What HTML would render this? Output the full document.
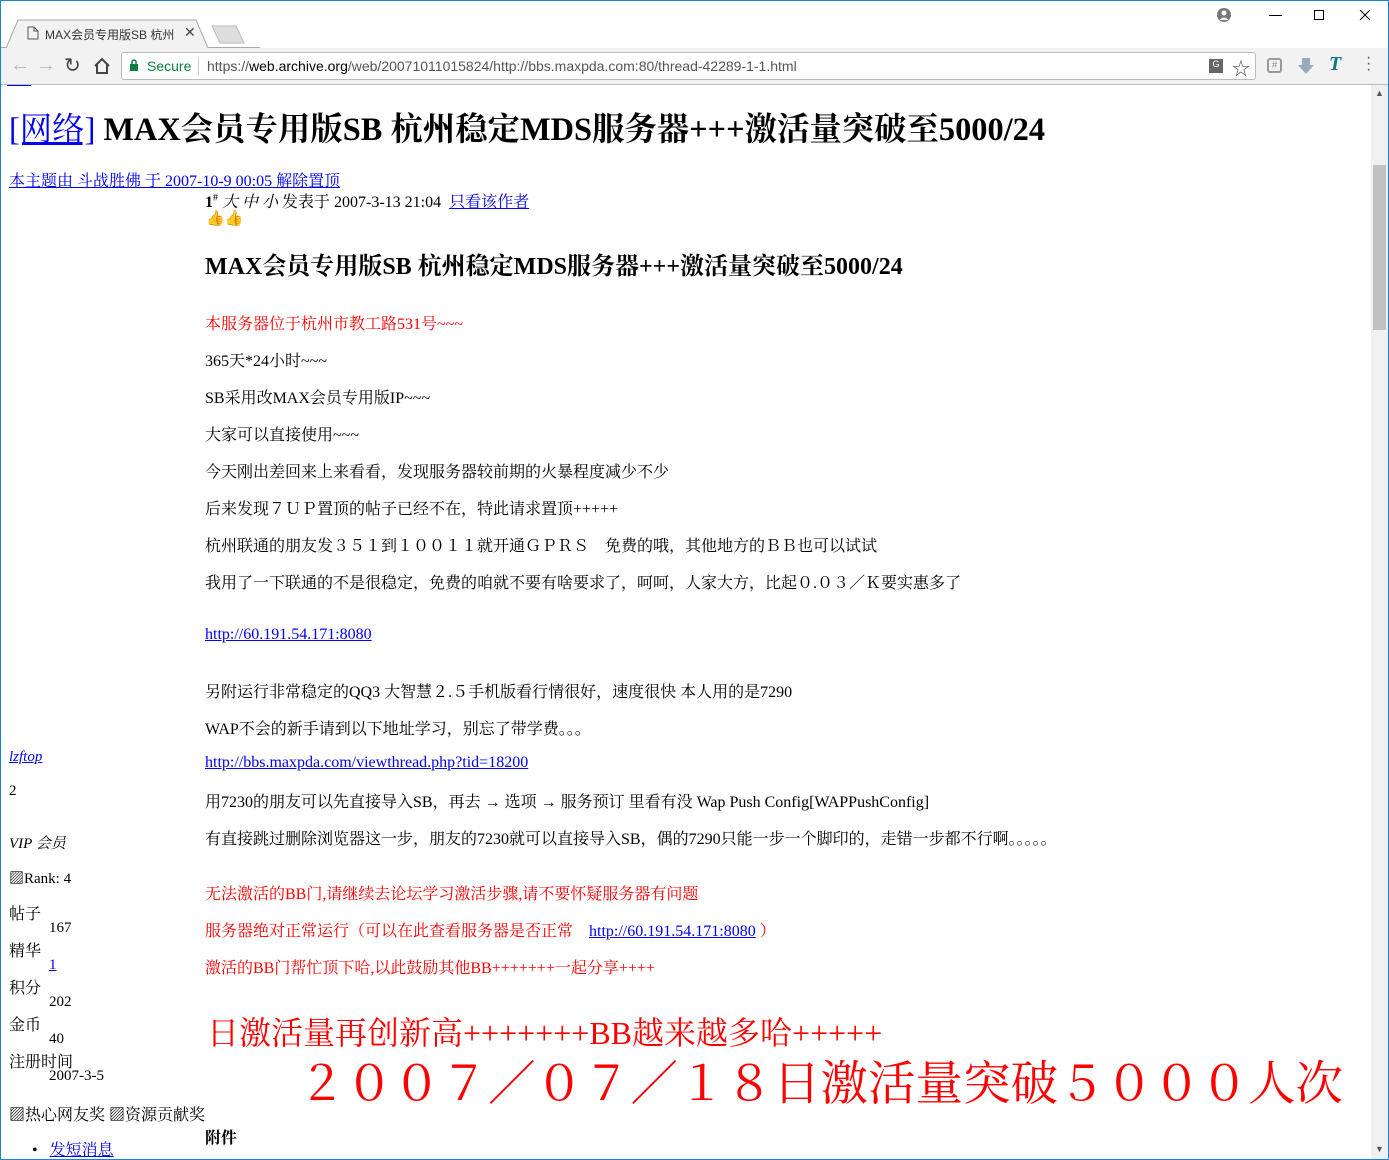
<!DOCTYPE html>
<html><head><meta charset="utf-8"><style>
*{margin:0;padding:0;box-sizing:border-box}
body{width:1389px;height:1160px;overflow:hidden;background:#fff;font-family:"Liberation Serif","Noto Serif CJK SC",serif;font-size:16px;color:#000;position:relative}
.frame{position:absolute;inset:0;border:1px solid #1883d7;pointer-events:none;z-index:9}
.ui{font-family:"Liberation Sans","Noto Sans CJK SC",sans-serif}
.a{position:absolute;white-space:nowrap}
a{color:#00e;text-decoration:underline}
.r{color:#f00}
</style></head><body>
<div class="frame"></div>
<div class="a" style="left:0;top:0;width:1389px;height:48px;background:#fff"></div>
<svg class="a" style="left:0;top:18px" width="260" height="32">
<path d="M6 30 L18 2 H196 L208 30" fill="#f2f2f2" stroke="#aaa"/>
<path d="M212 8 H236 L244 25 H220 Z" fill="#ddd" stroke="#bbb"/>
<path d="M0 29.5 H6 M208 29.5 H1389" stroke="#aaa"/>
</svg>
<svg class="a" style="left:27px;top:26px" width="12" height="14"><path d="M1 1H7L11 5V13H1Z M7 1V5H11" fill="none" stroke="#555"/></svg>
<div class="a ui" style="left:45px;top:26px;font-size:12px;color:#333;width:130px;overflow:hidden">MAX会员专用版SB 杭州稳</div>
<div class="a ui" style="left:184px;top:24px;font-size:14px;color:#444">✕</div>
<svg class="a" style="left:1216px;top:8px" width="160" height="16">
<circle cx="8" cy="7" r="7" fill="#777"/><circle cx="8" cy="5" r="2.5" fill="#fff"/><path d="M3.5 12 Q8 7 12.5 12" fill="#fff"/>
<path d="M53 7.5H66" stroke="#000"/>
<rect x="98.5" y="2.5" width="9" height="9" fill="none" stroke="#000"/>
<path d="M144 2 L154 12 M154 2 L144 12" stroke="#000"/>
</svg>
<div class="a" style="left:0;top:48px;width:1389px;height:37px;background:#f2f2f2;border-bottom:1px solid #bbb"></div>
<div class="a ui" style="left:10px;top:54px;font-size:20px;color:#bbb">←</div>
<div class="a ui" style="left:36px;top:54px;font-size:20px;color:#bbb">→</div>
<div class="a ui" style="left:64px;top:53px;font-size:20px;color:#444">↻</div>
<svg class="a" style="left:93px;top:57px" width="18" height="18"><path d="M2 9 L9 2 L16 9 M4 7 V16 H14 V7" fill="none" stroke="#444" stroke-width="2"/></svg>
<div class="a" style="left:121px;top:52px;width:1135px;height:28px;background:#fff;border:1px solid #bbb;border-radius:3px"></div>
<svg class="a" style="left:129px;top:59px" width="10" height="13"><rect x="1" y="5" width="8" height="7" fill="#0b8043"/><path d="M3 5V3a2 2 0 0 1 4 0V5" fill="none" stroke="#0b8043" stroke-width="1.5"/></svg>
<div class="a ui" style="left:147px;top:58px;font-size:14px;color:#0b8043">Secure</div>
<div class="a" style="left:198px;top:57px;width:1px;height:18px;background:#ccc"></div>
<div class="a ui" style="left:207px;top:58px;font-size:14px;color:#555">https://<span style="color:#000">web.archive.org</span>/web/20071011015824/http://bbs.maxpda.com:80/thread-42289-1-1.html</div>
<div class="a ui" style="left:1209px;top:59px;width:14px;height:14px;background:#666;color:#fff;font-size:9px;text-align:center">G</div>
<div class="a ui" style="left:1232px;top:55px;font-size:18px;color:#555">☆</div>
<div class="a ui" style="left:1267px;top:58px;width:15px;height:15px;border:2px solid #999;border-radius:3px;font-size:10px;color:#999;text-align:center;line-height:11px">#</div>
<svg class="a" style="left:1297px;top:57px" width="18" height="18"><path d="M5 1H13V8H17L9 17L1 8H5Z" fill="#9ab"/></svg>
<div class="a" style="left:1329px;top:53px;font-size:20px;font-style:italic;font-weight:bold;color:#178">T</div>
<div class="a ui" style="left:1366px;top:55px;font-size:16px;color:#555;line-height:6px">·<br>·<br>·</div>
<div class="a" style="left:1371px;top:85px;width:17px;height:1074px;background:#f0f0f0"></div>
<div class="a" style="left:1373px;top:165px;width:13px;height:165px;background:#c1c1c1"></div>
<div class="a ui" style="left:1375px;top:88px;font-size:9px;color:#555">▲</div>
<div class="a ui" style="left:1375px;top:1144px;font-size:9px;color:#555">▼</div>
<div class="a" style="left:7px;top:85px;width:24px;height:1px;background:#00e"></div>

<div class="a" style="left:9px;top:104px;font-size:32.4px;font-weight:bold"><a style="font-weight:normal">[网络]</a> MAX会员专用版SB 杭州稳定MDS服务器+++激活量突破至5000/24</div>
<div class="a" style="left:9px;top:168px"><a>本主题由 斗战胜佛 于 2007-10-9 00:05 解除置顶</a></div>
<div class="a" style="left:205px;top:189px;font-size:16px"><b>1</b><sup style="font-size:10px">#</sup> <i>大 中 小</i> 发表于 2007-3-13 21:04&nbsp; <a>只看该作者</a></div>
<div class="a" style="left:206px;top:209px;font-size:15px;color:#d90">👍👍</div>
<div class="a" style="left:205px;top:246px;font-size:24px;font-weight:bold">MAX会员专用版SB 杭州稳定MDS服务器+++激活量突破至5000/24</div>
<div class="a r" style="left:205px;top:311px">本服务器位于杭州市教工路531号~~~</div>
<div class="a" style="left:205px;top:348px">365天*24小时~~~</div>
<div class="a" style="left:205px;top:385px">SB采用改MAX会员专用版IP~~~</div>
<div class="a" style="left:205px;top:422px">大家可以直接使用~~~</div>
<div class="a" style="left:205px;top:459px">今天刚出差回来上来看看，发现服务器较前期的火暴程度减少不少</div>
<div class="a" style="left:205px;top:496px">后来发现７ＵＰ置顶的帖子已经不在，特此请求置顶+++++</div>
<div class="a" style="left:205px;top:533px">杭州联通的朋友发３５１到１００１１就开通ＧＰＲＳ　免费的哦，其他地方的ＢＢ也可以试试</div>
<div class="a" style="left:205px;top:570px">我用了一下联通的不是很稳定，免费的咱就不要有啥要求了，呵呵，人家大方，比起０.０３／Ｋ要实惠多了</div>
<div class="a" style="left:205px;top:626px;font-size:16px"><a>http://60.191.54.171:8080</a></div>
<div class="a" style="left:205px;top:679px">另附运行非常稳定的QQ3 大智慧２.５手机版看行情很好，速度很快 本人用的是7290</div>
<div class="a" style="left:205px;top:716px">WAP不会的新手请到以下地址学习，别忘了带学费。。。</div>
<div class="a" style="left:205px;top:754px;font-size:16px"><a>http://bbs.maxpda.com/viewthread.php?tid=18200</a></div>
<div class="a" style="left:205px;top:789px">用7230的朋友可以先直接导入SB，再去 → 选项 → 服务预订 里看有没 Wap Push Config[WAPPushConfig]</div>
<div class="a" style="left:205px;top:826px">有直接跳过删除浏览器这一步，朋友的7230就可以直接导入SB，偶的7290只能一步一个脚印的，走错一步都不行啊。。。。。</div>
<div class="a r" style="left:205px;top:881px">无法激活的BB门,请继续去论坛学习激活步骤,请不要怀疑服务器有问题</div>
<div class="a r" style="left:205px;top:918px">服务器绝对正常运行（可以在此查看服务器是否正常　<a style="font-size:16px">http://60.191.54.171:8080</a> ）</div>
<div class="a r" style="left:205px;top:955px">激活的BB门帮忙顶下哈,以此鼓励其他BB+++++++一起分享++++</div>
<div class="a r" style="left:207px;top:1008px;font-size:32px">日激活量再创新高+++++++BB越来越多哈+++++</div>
<div class="a r" style="left:298px;top:1045px;font-size:47.5px">２００７／０７／１８日激活量突破５０００人次</div>
<div class="a" style="left:205px;top:1125px;font-weight:bold">附件</div>

<div class="a" style="left:9px;top:749px;font-size:15px"><a><i>lzftop</i></a></div>
<div class="a" style="left:9px;top:783px;font-size:15px">2</div>
<div class="a" style="left:9px;top:832px;font-size:15px"><i>VIP 会员</i></div>
<div class="a" style="left:9px;top:867px;font-size:15px">▨Rank: 4</div>
<div class="a" style="left:9px;top:901px">帖子</div>
<div class="a" style="left:49px;top:920px;font-size:15px">167</div>
<div class="a" style="left:9px;top:938px">精华</div>
<div class="a" style="left:49px;top:957px;font-size:15px"><a>1</a></div>
<div class="a" style="left:9px;top:975px">积分</div>
<div class="a" style="left:49px;top:994px;font-size:15px">202</div>
<div class="a" style="left:9px;top:1012px">金币</div>
<div class="a" style="left:49px;top:1031px;font-size:15px">40</div>
<div class="a" style="left:9px;top:1049px">注册时间</div>
<div class="a" style="left:49px;top:1068px;font-size:15px">2007-3-5</div>
<div class="a" style="left:9px;top:1102px">▨热心网友奖 ▨资源贡献奖</div>
<div class="a" style="left:32px;top:1137px">•&nbsp;&nbsp;&nbsp;<a>发短消息</a></div>
</body></html>
